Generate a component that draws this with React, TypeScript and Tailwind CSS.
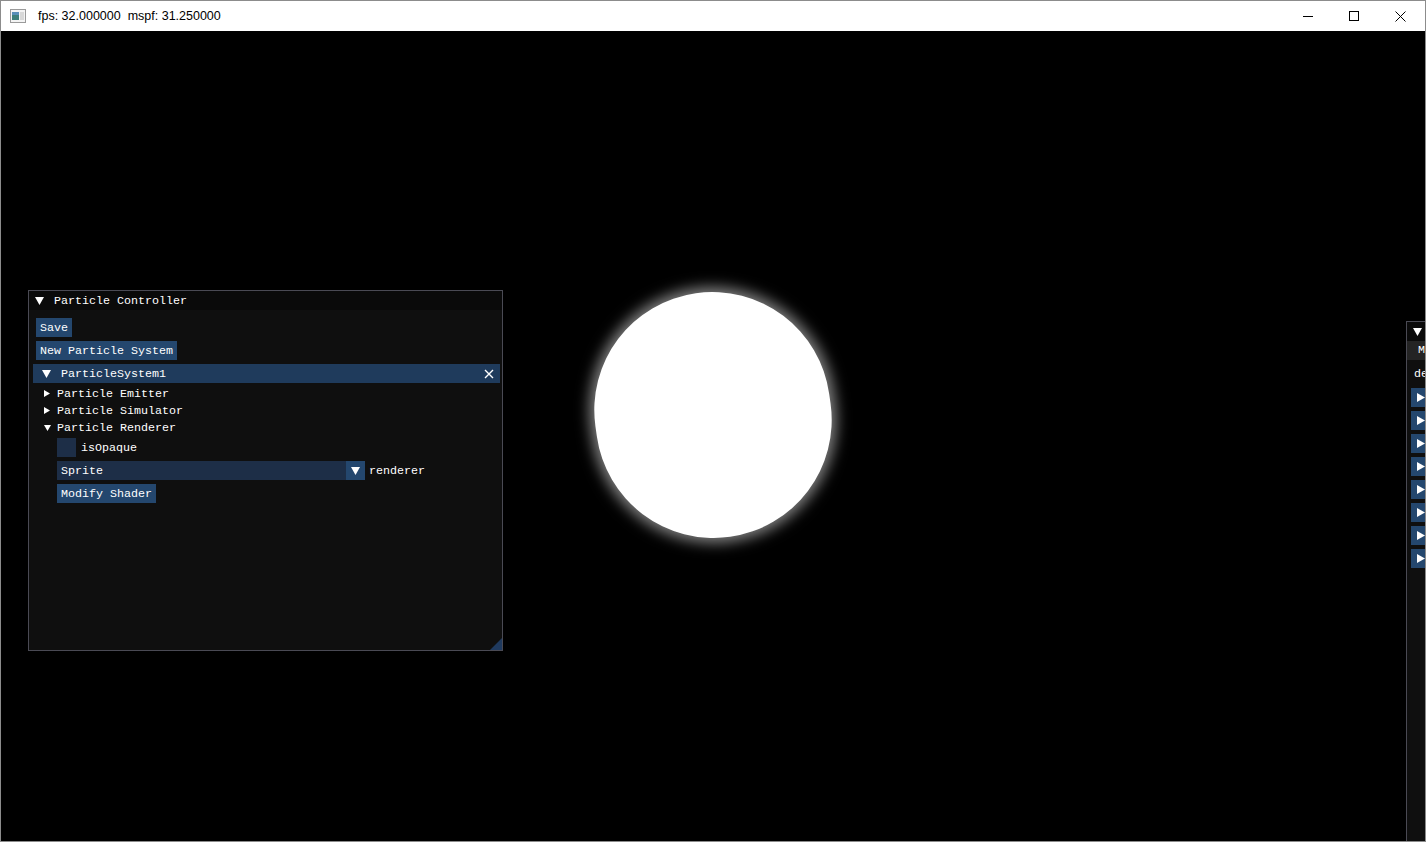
import React from "react";

const mono = "font-['Liberation_Mono','DejaVu_Sans_Mono',monospace] text-[11.67px] leading-[13px] text-white";

function DownTri({ size = 9 }: { size?: number }) {
  return (
    <svg width={size} height={size - 1} viewBox="0 0 9 8" className="shrink-0">
      <polygon points="0,0 9,0 4.5,8" fill="#ffffff" />
    </svg>
  );
}

function SmallRight() {
  return (
    <svg width="6" height="7" viewBox="0 0 6 7" className="shrink-0">
      <polygon points="0,0 6,3.5 0,7" fill="#ffffff" />
    </svg>
  );
}

function SmallDown() {
  return (
    <svg width="7" height="6" viewBox="0 0 7 6" className="shrink-0">
      <polygon points="0,0 7,0 3.5,6" fill="#ffffff" />
    </svg>
  );
}

function Button({ label }: { label: string }) {
  return (
    <div className="h-[19px] self-start bg-[#24476e] px-[4px] pt-[1px] flex items-center whitespace-pre">{label}</div>
  );
}

function TreeNode({ label, open }: { label: string; open?: boolean }) {
  return (
    <div className="h-[13px] flex items-center whitespace-pre">
      <div className="w-[21px] pl-[8px] flex items-center">{open ? <SmallDown /> : <SmallRight />}</div>
      <span className="pt-[1px]">{label}</span>
    </div>
  );
}

function LeftPanel() {
  return (
    <div className={`absolute left-[27px] top-[259px] w-[475px] h-[361px] border border-[#4a4a54] bg-[#0f0f0f] flex flex-col ${mono}`}>
      <div className="h-[19px] bg-[#0a0a0a] flex items-center pl-[6px] gap-[10px] whitespace-pre">
        <DownTri />
        <span className="pt-[1px]">Particle Controller</span>
      </div>
      <div className="flex-1 flex flex-col gap-[4px] pt-[8px] pl-[7px]">
        <Button label="Save" />
        <Button label="New Particle System" />
        <div className="ml-[-3px] w-[467px] h-[19px] bg-[#1f3b5c] flex items-center pl-[9px] pr-[6px]">
          <DownTri />
          <span className="ml-[10px] pt-[1px] whitespace-pre flex-1">ParticleSystem1</span>
          <svg width="10" height="10" viewBox="0 0 10 10">
            <path d="M1 1 L9 9 M9 1 L1 9" stroke="#ffffff" strokeWidth="1.4" />
          </svg>
        </div>
        <TreeNode label="Particle Emitter" />
        <TreeNode label="Particle Simulator" />
        <TreeNode label="Particle Renderer" open />
        <div className="ml-[21px] h-[19px] flex items-center gap-[5px]">
          <div className="w-[19px] h-[19px] bg-[#1d2e47]" />
          <span className="pt-[1px]">isOpaque</span>
        </div>
        <div className="ml-[21px] h-[19px] flex items-center gap-[4px]">
          <div className="w-[308px] h-[19px] bg-[#1d2e47] flex items-center">
            <span className="flex-1 pl-[4px] pt-[1px]">Sprite</span>
            <div className="w-[19px] h-[19px] bg-[#24476e] flex items-center justify-center">
              <DownTri />
            </div>
          </div>
          <span className="pt-[1px]">renderer</span>
        </div>
        <div className="ml-[21px] flex">
          <Button label="Modify Shader" />
        </div>
      </div>
      <svg width="12" height="12" viewBox="0 0 12 12" className="absolute right-0 bottom-0">
        <polygon points="12,0 12,12 0,12" fill="#1f3a5f" />
      </svg>
    </div>
  );
}

function RightPanel() {
  const rows = [0, 1, 2, 3, 4, 5, 6, 7];
  return (
    <div className={`absolute left-[1405px] top-[290px] w-[300px] h-[600px] border border-[#4a4a54] bg-[#0f0f0f] flex flex-col ${mono}`}>
      <div className="h-[19px] bg-[#0a0a0a] flex items-center pl-[6px] gap-[10px] whitespace-pre">
        <DownTri />
        <span>Inspector</span>
      </div>
      <div className="h-[19px] bg-[#242424] flex items-center pl-[11px] whitespace-pre">Menu</div>
      <div className="flex flex-col pt-[7px] pl-[7px] gap-[4px]">
        <div className="h-[14px] flex items-center whitespace-pre">default</div>
        <div className="flex flex-col gap-[4px] ml-[-3px] mt-[3px]">
          {rows.map((r) => (
            <div key={r} className="w-[19px] h-[19px] bg-[#24476e] flex items-center justify-center">
              <svg width="8" height="9" viewBox="0 0 8 9">
                <polygon points="0,0 8,4.5 0,9" fill="#ffffff" />
              </svg>
            </div>
          ))}
        </div>
      </div>
    </div>
  );
}

export default function App() {
  return (
    <div className="w-[1426px] h-[842px] flex flex-col bg-black border border-[#8c8c8c] overflow-hidden">
      <div className="h-[30px] bg-white flex items-center shrink-0">
        <div className="pl-[9px] pr-[12px] flex items-center">
          <svg width="16" height="14" viewBox="0 0 16 14">
            <rect x="0.5" y="0.5" width="15" height="13" fill="#f4f4f4" stroke="#9a9a9a" />
            <rect x="2" y="3" width="7" height="8" fill="#3f7f7a" />
            <rect x="2" y="3" width="7" height="3" fill="#5a8fb8" />
            <rect x="10" y="3" width="4" height="8" fill="#d8d8d8" />
          </svg>
        </div>
        <span className="font-['Liberation_Sans','Noto_Sans',sans-serif] text-[12.5px] text-black whitespace-pre">fps: 32.000000  mspf: 31.250000</span>
        <div className="flex-1" />
        <div className="w-[46px] h-[30px] flex items-center justify-center">
          <svg width="10" height="10" viewBox="0 0 10 10">
            <path d="M0 5.5 H10" stroke="#000" strokeWidth="1" />
          </svg>
        </div>
        <div className="w-[46px] h-[30px] flex items-center justify-center">
          <svg width="10" height="10" viewBox="0 0 10 10">
            <rect x="0.5" y="0.5" width="9" height="9" fill="none" stroke="#000" strokeWidth="1" />
          </svg>
        </div>
        <div className="w-[46px] h-[30px] flex items-center justify-center mr-[2px]">
          <svg width="11" height="11" viewBox="0 0 11 11">
            <path d="M0.5 0.5 L10.5 10.5 M10.5 0.5 L0.5 10.5" stroke="#000" strokeWidth="1" />
          </svg>
        </div>
      </div>
      <div className="relative flex-1 bg-black overflow-hidden">
        <div className="absolute left-[594px] top-[261px] w-[236px] h-[246px] rounded-full bg-white shadow-[0_0_14px_5px_rgba(255,255,255,0.5)] rotate-[-8deg]" />
        <LeftPanel />
        <RightPanel />
      </div>
    </div>
  );
}
